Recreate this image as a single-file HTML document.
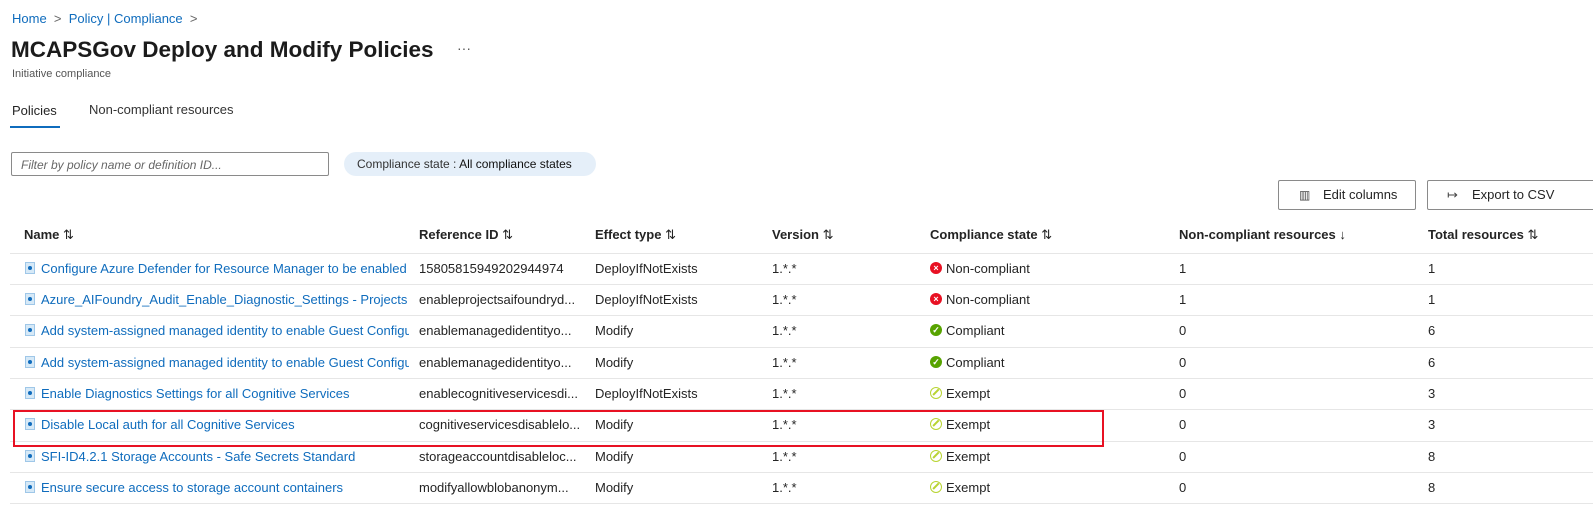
<!DOCTYPE html>
<html><head><meta charset="utf-8"><style>
*{margin:0;padding:0;box-sizing:border-box}
body{width:1593px;height:512px;overflow:hidden;background:#fff;font-family:"Liberation Sans",sans-serif;color:#242424;font-size:13px;position:relative}
.a{position:absolute;white-space:nowrap}
.link{color:#0f6cbd}
.hdr{font-weight:bold;color:#242424;top:227px}
.line{position:absolute;left:10px;right:0;height:1px;background:#e6e6e6}
.row{position:absolute;left:0;width:1593px;height:31px}
.row span{position:absolute;top:8px;white-space:nowrap}
.doc{position:absolute;left:25px;top:9px;width:10px;height:12px;background:#d6e9f7;border:1px solid #9fc7e8}
.doc:after{content:"";position:absolute;left:2px;top:3px;width:4px;height:4px;border-radius:50%;background:#0f6cbd}
.ic{position:absolute;left:930px;top:9px;width:12px;height:12px;border-radius:50%;color:#fff;font-size:9px;line-height:12px;text-align:center;font-weight:bold}
.nc{background:#e81123}
.ok{background:#57a300}
.ex{border:1.5px solid #b8d432;background:#fff}
.ex:after{content:"";position:absolute;left:4px;top:0px;width:1.5px;height:8px;background:#b8d432;transform:rotate(45deg)}
.btn{position:absolute;top:180px;height:30px;border:1px solid #8a8a8a;border-radius:2px;background:#fff;font-size:13px;line-height:28px}
</style></head><body>
<div class="a link" style="left:12px;top:11px">Home <span style="color:#666">&nbsp;&gt;&nbsp;</span> Policy | Compliance <span style="color:#666">&nbsp;&gt;</span></div>
<div class="a" style="left:11px;top:37px;font-size:22.5px;font-weight:bold;color:#1b1b1b">MCAPSGov Deploy and Modify Policies</div>
<div class="a" style="left:457px;top:40px;font-size:14px;color:#555">···</div>
<div class="a" style="left:12px;top:68px;font-size:11px;color:#555">Initiative compliance</div>
<div class="a" style="left:12px;top:103px;font-size:13px;color:#242424">Policies</div>
<div class="a" style="left:10px;top:126px;width:50px;height:2px;background:#0f6cbd"></div>
<div class="a" style="left:89px;top:102px;font-size:13px;color:#333">Non-compliant resources</div>
<div class="a" style="left:11px;top:152px;width:318px;height:24px;border:1px solid #8a8a8a;border-radius:2px;font-style:italic;color:#666;font-size:12px;padding:5px 9px">Filter by policy name or definition ID...</div>
<div class="a" style="left:344px;top:152px;width:252px;height:24px;border-radius:12px;background:#e5eff9;padding:5px 13px;font-size:12px;color:#333">Compliance state : <b style="font-weight:normal;color:#111">All compliance states</b></div>
<div class="btn" style="left:1278px;width:138px"><span style="position:absolute;left:20px;font-size:12px;color:#444">▥</span><span style="position:absolute;left:44px">Edit columns</span></div>
<div class="btn" style="left:1427px;width:170px"><span style="position:absolute;left:19px;color:#444">↦</span><span style="position:absolute;left:44px">Export to CSV</span></div>
<div class="a hdr" style="left:24px">Name <span style="font-weight:normal">⇅</span></div>
<div class="a hdr" style="left:419px">Reference ID <span style="font-weight:normal">⇅</span></div>
<div class="a hdr" style="left:595px">Effect type <span style="font-weight:normal">⇅</span></div>
<div class="a hdr" style="left:772px">Version <span style="font-weight:normal">⇅</span></div>
<div class="a hdr" style="left:930px">Compliance state <span style="font-weight:normal">⇅</span></div>
<div class="a hdr" style="left:1179px">Non-compliant resources <span style="font-weight:normal">↓</span></div>
<div class="a hdr" style="left:1428px">Total resources <span style="font-weight:normal">⇅</span></div>
<div class="line" style="top:253px"></div>

<div class="row" style="top:253px"><div class="doc"></div><span class="link" style="left:41px">Configure Azure Defender for Resource Manager to be enabled</span><span style="left:419px">15805815949202944974</span><span style="left:595px">DeployIfNotExists</span><span style="left:772px">1.*.*</span><div class="ic nc">×</div><span style="left:946px">Non-compliant</span><span style="left:1179px">1</span><span style="left:1428px">1</span></div>
<div class="line" style="top:284px"></div>
<div class="row" style="top:284px"><div class="doc"></div><span class="link" style="left:41px">Azure_AIFoundry_Audit_Enable_Diagnostic_Settings - Projects</span><span style="left:419px">enableprojectsaifoundryd...</span><span style="left:595px">DeployIfNotExists</span><span style="left:772px">1.*.*</span><div class="ic nc">×</div><span style="left:946px">Non-compliant</span><span style="left:1179px">1</span><span style="left:1428px">1</span></div>
<div class="line" style="top:315px"></div>
<div class="row" style="top:315px"><div class="doc"></div><span class="link" style="left:41px;width:368px;overflow:hidden">Add system-assigned managed identity to enable Guest Configuration</span><span style="left:419px">enablemanagedidentityo...</span><span style="left:595px">Modify</span><span style="left:772px">1.*.*</span><div class="ic ok">✓</div><span style="left:946px">Compliant</span><span style="left:1179px">0</span><span style="left:1428px">6</span></div>
<div class="line" style="top:347px"></div>
<div class="row" style="top:347px"><div class="doc"></div><span class="link" style="left:41px;width:368px;overflow:hidden">Add system-assigned managed identity to enable Guest Configuration</span><span style="left:419px">enablemanagedidentityo...</span><span style="left:595px">Modify</span><span style="left:772px">1.*.*</span><div class="ic ok">✓</div><span style="left:946px">Compliant</span><span style="left:1179px">0</span><span style="left:1428px">6</span></div>
<div class="line" style="top:378px"></div>
<div class="row" style="top:378px"><div class="doc"></div><span class="link" style="left:41px">Enable Diagnostics Settings for all Cognitive Services</span><span style="left:419px">enablecognitiveservicesdi...</span><span style="left:595px">DeployIfNotExists</span><span style="left:772px">1.*.*</span><div class="ic ex"></div><span style="left:946px">Exempt</span><span style="left:1179px">0</span><span style="left:1428px">3</span></div>
<div class="line" style="top:409px"></div>
<div class="row" style="top:409px"><div class="doc"></div><span class="link" style="left:41px">Disable Local auth for all Cognitive Services</span><span style="left:419px">cognitiveservicesdisablelo...</span><span style="left:595px">Modify</span><span style="left:772px">1.*.*</span><div class="ic ex"></div><span style="left:946px">Exempt</span><span style="left:1179px">0</span><span style="left:1428px">3</span></div>
<div class="line" style="top:441px"></div>
<div class="row" style="top:441px"><div class="doc"></div><span class="link" style="left:41px">SFI-ID4.2.1 Storage Accounts - Safe Secrets Standard</span><span style="left:419px">storageaccountdisableloc...</span><span style="left:595px">Modify</span><span style="left:772px">1.*.*</span><div class="ic ex"></div><span style="left:946px">Exempt</span><span style="left:1179px">0</span><span style="left:1428px">8</span></div>
<div class="line" style="top:472px"></div>
<div class="row" style="top:472px"><div class="doc"></div><span class="link" style="left:41px">Ensure secure access to storage account containers</span><span style="left:419px">modifyallowblobanonym...</span><span style="left:595px">Modify</span><span style="left:772px">1.*.*</span><div class="ic ex"></div><span style="left:946px">Exempt</span><span style="left:1179px">0</span><span style="left:1428px">8</span></div>
<div class="line" style="top:503px"></div>
<div class="a" style="left:13px;top:410px;width:1091px;height:37px;border:2px solid #e81123"></div>
</body></html>
